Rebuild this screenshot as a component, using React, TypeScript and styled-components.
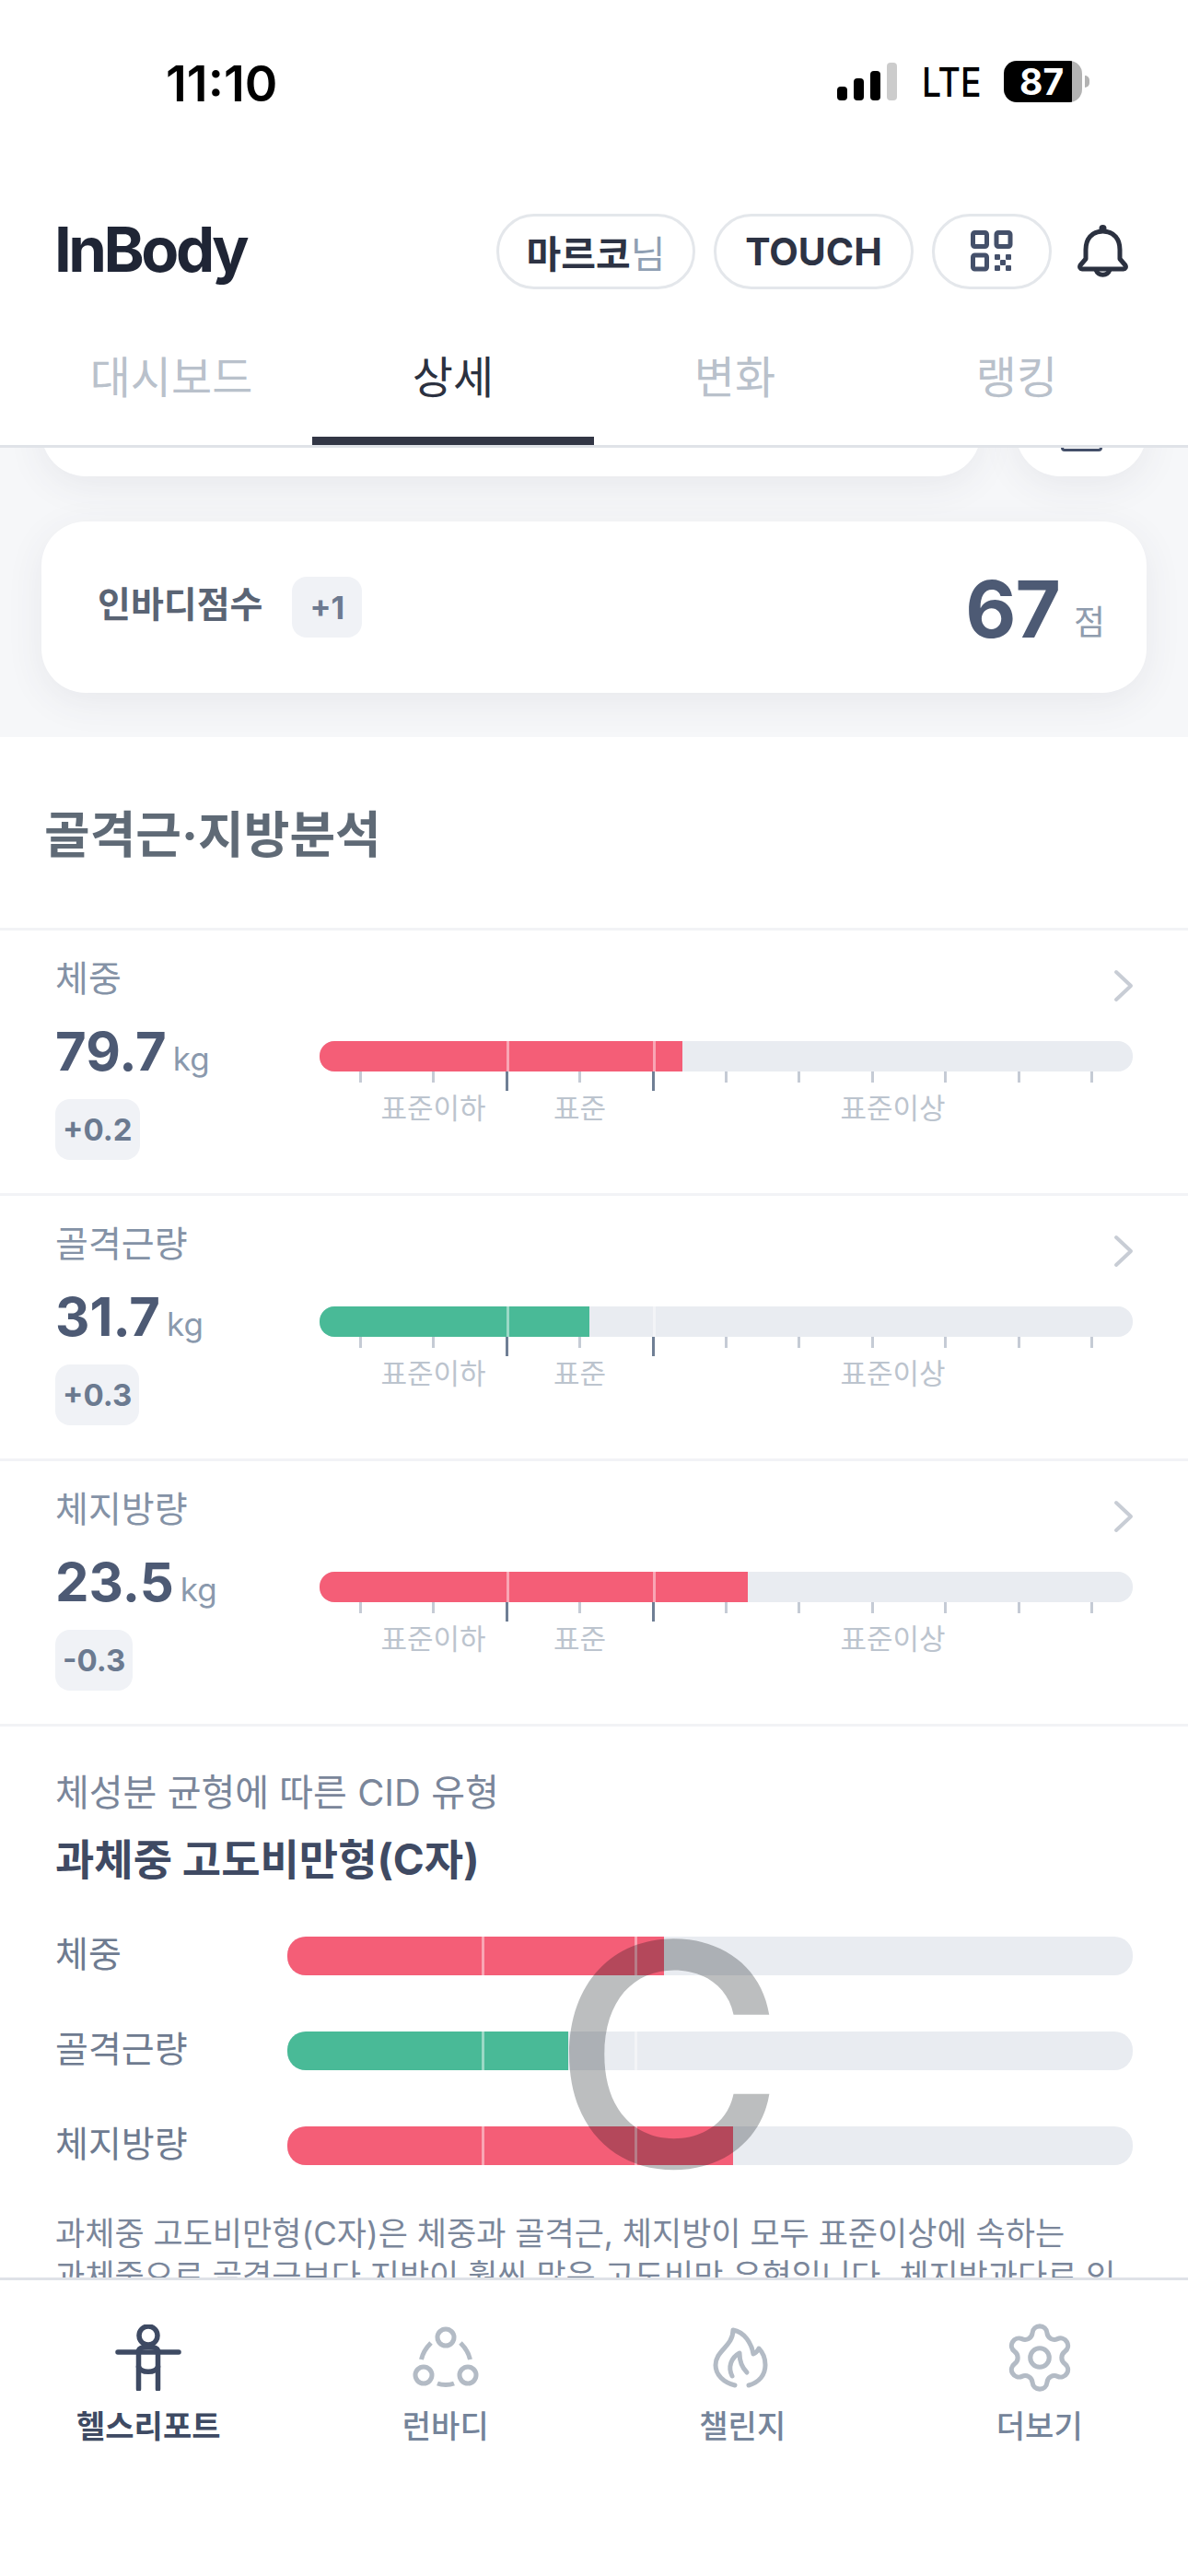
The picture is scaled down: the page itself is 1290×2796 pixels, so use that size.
import styled, { createGlobalStyle } from 'styled-components';
import { Settings } from 'lucide-react';

const rows = [
  { name: '체중', value: '79.7', diff: '+0.2', fill: 394, color: '#f45e77' },
  { name: '골격근량', value: '31.7', diff: '+0.3', fill: 293, color: '#49ba97' },
  { name: '체지방량', value: '23.5', diff: '-0.3', fill: 465, color: '#f45e77' },
];

const cidRows = [
  { name: '체중', fill: 409, color: '#f45e77' },
  { name: '골격근량', fill: 305, color: '#49ba97' },
  { name: '체지방량', fill: 484, color: '#f45e77' },
];

const ticks = [false, false, true, false, true, false, false, false, false, false, false];

export default function App() {
  return (
    <Page>
      <GlobalStyle />
      <StatusBar>
        <Time>11:10</Time>
        <StatusRight>
          <Signal>
            <SignalBar $h={15} />
            <SignalBar $h={24} />
            <SignalBar $h={32} />
            <SignalBar $h={41} $off />
          </Signal>
          <Lte>LTE</Lte>
          <Battery>
            <BatteryBody>87</BatteryBody>
            <BatteryNub />
          </Battery>
        </StatusRight>
      </StatusBar>

      <TopBar>
        <Logo>InBody</Logo>
        <TopActions>
          <Pill $w={216}>
            마르코<PillSuffix>님</PillSuffix>
          </Pill>
          <Pill $w={217}>TOUCH</Pill>
          <Pill $w={130}>
            <svg width="46" height="46" viewBox="0 0 46 46" fill="none" stroke="#44506a" strokeWidth="5">
              <rect x="2.5" y="2.5" width="15" height="15" rx="2" />
              <rect x="28" y="2.5" width="15" height="15" rx="2" />
              <rect x="2.5" y="27" width="15" height="15" rx="2" />
              <g fill="#44506a" stroke="none">
                <rect x="26" y="26" width="6" height="6" rx="1" />
                <rect x="38" y="26" width="6" height="6" rx="1" />
                <rect x="32" y="32" width="6" height="6" rx="1" />
                <rect x="26" y="38" width="6" height="6" rx="1" />
                <rect x="38" y="38" width="6" height="6" rx="1" />
              </g>
            </svg>
          </Pill>
          <BellWrap>
            <svg width="56" height="62" viewBox="0 0 56 62" fill="none" stroke="#2b3140" strokeWidth="5" strokeLinejoin="round">
              <circle cx="27.5" cy="5" r="4" fill="#2b3140" stroke="none" />
              <path d="M27.5 8C15 8 9 17 9 28V38L3 45C2 47 3 49 5 49H50C52 49 53 47 52 45L46 38V28C46 17 40 8 27.5 8Z" />
              <path d="M20 50a8 8 0 0 0 15 0" />
            </svg>
          </BellWrap>
        </TopActions>
      </TopBar>

      <TabBar>
        <Tab>대시보드</Tab>
        <Tab $active>상세</Tab>
        <Tab>변화</Tab>
        <Tab>랭킹</Tab>
      </TabBar>

      <Content>
        <GraySection>
          <ClippedRow>
            <ClippedCard />
            <SmallCard>
              <CalendarBase />
            </SmallCard>
          </ClippedRow>
          <ScoreCard>
            <ScoreLabel>인바디점수</ScoreLabel>
            <ScoreBadge>+1</ScoreBadge>
            <ScoreValue>67</ScoreValue>
            <ScoreUnit>점</ScoreUnit>
          </ScoreCard>
        </GraySection>

        <SectionTitle>골격근·지방분석</SectionTitle>

        {rows.map((row) => (
          <MetricRow key={row.name}>
            <MetricInfo>
              <MetricName>{row.name}</MetricName>
              <MetricValue>
                {row.value}
                <MetricUnit>kg</MetricUnit>
              </MetricValue>
              <DiffBadge>{row.diff}</DiffBadge>
            </MetricInfo>
            <MetricChart>
              <Chevron>
                <svg width="26" height="36" viewBox="0 0 26 36" fill="none" stroke="#c8cdd5" strokeWidth="4" strokeLinecap="round" strokeLinejoin="round">
                  <path d="M5 3L21 18L5 33" />
                </svg>
              </Chevron>
              <MetricTrack>
                <TrackFill $color={row.color} style={{ width: row.fill }} />
                <TrackMark $left={203} />
                <TrackMark $left={362} />
              </MetricTrack>
              <Ticks>
                {ticks.map((major, i) => (
                  <Tick key={i} $major={major} />
                ))}
              </Ticks>
              <ScaleLabels>
                <span>표준이하</span>
                <span>표준</span>
                <span>표준이상</span>
              </ScaleLabels>
            </MetricChart>
          </MetricRow>
        ))}

        <CidSection>
          <CidEyebrow>체성분 균형에 따른 CID 유형</CidEyebrow>
          <CidTitle>과체중 고도비만형(C자)</CidTitle>
          <CidRows>
            {cidRows.map((row) => (
              <CidRow key={row.name}>
                <CidName>{row.name}</CidName>
                <CidTrack>
                  <TrackFill $color={row.color} style={{ width: row.fill }} />
                  <TrackMark $left={211} />
                  <TrackMark $left={377} />
                </CidTrack>
              </CidRow>
            ))}
            <CidLetter>C</CidLetter>
          </CidRows>
          <CidText>
            과체중 고도비만형(C자)은 체중과 골격근, 체지방이 모두 표준이상에 속하는
            <br />
            과체중으로 골격근보다 지방이 훨씬 많은 고도비만 유형입니다. 체지방과다로 인
          </CidText>
        </CidSection>
      </Content>

      <BottomNav>
        <NavItem>
          <svg width="72" height="72" viewBox="0 0 72 72" fill="none" stroke="#3e4a63" strokeWidth="5.5" strokeLinecap="round">
            <circle cx="36" cy="12" r="10" />
            <path d="M3 30H69" />
            <path d="M25.5 30V70M46.5 30V70" />
            <path d="M25.5 28C27 23 45 23 46.5 28" />
            <path d="M25.5 46C28 53 44 53 46.5 46" />
          </svg>
          <NavLabel $active>헬스리포트</NavLabel>
        </NavItem>
        <NavItem>
          <svg width="72" height="72" viewBox="0 0 72 72" fill="none" stroke="#b3bbc5" strokeWidth="5">
            <circle cx="36" cy="14" r="9" />
            <circle cx="12" cy="55" r="9" />
            <circle cx="60" cy="55" r="9" />
            <path d="M9.5 38C11 31 15 25 20 20M62.5 38C61 31 57 25 52 20M27 64C32 66 40 66 45 64" />
          </svg>
          <NavLabel>런바디</NavLabel>
        </NavItem>
        <NavItem>
          <svg width="72" height="72" viewBox="2 0 72 72" fill="none" stroke="#b3bbc5" strokeWidth="5" strokeLinecap="round" strokeLinejoin="round">
            <path d="M30 66C18 63 9 55 9 44C9 28 28 24 28 6C40 8 48 20 50 32C53 31 55 28 56 26C61 31 63 37 63 44C63 55 56 63 45 66" />
            <path d="M27 56C22 46 26 36 35 31C35 41 38 47 43 52" />
          </svg>
          <NavLabel>챌린지</NavLabel>
        </NavItem>
        <NavItem>
          <GearIcon size={82} color="#b3bbc5" strokeWidth={1.5} />
          <NavLabel>더보기</NavLabel>
        </NavItem>
      </BottomNav>
    </Page>
  );
}

const GlobalStyle = createGlobalStyle`
  html, body {
    margin: 0;
    padding: 0;
    background: #fff;
  }
  * {
    box-sizing: border-box;
  }
`;

const Page = styled.div`
  width: 1290px;
  height: 2796px;
  display: flex;
  flex-direction: column;
  overflow: hidden;
  background: #fff;
  font-family: Inter, "Noto Sans CJK KR", sans-serif;
`;

const StatusBar = styled.div`
  height: 232px;
  flex: none;
  padding: 62px 107px 0 180px;
  display: flex;
  justify-content: space-between;
  align-items: flex-start;
`;

const Time = styled.div`
  font-size: 54px;
  line-height: 54px;
  font-weight: 600;
  margin-top: 2px;
  color: #000;
`;

const StatusRight = styled.div`
  display: flex;
  align-items: flex-end;
  height: 49px;
`;

const Signal = styled.div`
  display: flex;
  align-items: flex-end;
  gap: 7px;
  height: 41px;
  margin-bottom: 2px;
`;

const SignalBar = styled.div<{ $h: number; $off?: boolean }>`
  width: 11px;
  height: ${(p) => p.$h}px;
  border-radius: 4px;
  background: ${(p) => (p.$off ? '#cccccc' : '#000')};
`;

const Lte = styled.div`
  width: 62px;
  margin: 0 27px 0 27px;
  font-size: 44px;
  line-height: 44px;
  font-weight: 500;
  color: #000;
  transform: scaleX(0.85);
  transform-origin: left center;
`;

const Battery = styled.div`
  display: flex;
  align-items: center;
`;

const BatteryBody = styled.div`
  width: 85px;
  height: 45px;
  border-radius: 14px;
  background: linear-gradient(to right, #000 74px, #b3b3b3 74px);
  color: #fff;
  font-size: 39px;
  line-height: 45px;
  font-weight: 700;
  padding-left: 17px;
`;

const BatteryNub = styled.div`
  width: 5px;
  height: 13px;
  margin-left: 3px;
  border-radius: 0 6px 6px 0;
  background: #b3b3b3;
`;

const TopBar = styled.div`
  height: 82px;
  flex: none;
  padding: 0 64px 0 59px;
  display: flex;
  justify-content: space-between;
  align-items: center;
`;

const Logo = styled.div`
  margin-top: -6px;
  font-size: 67px;
  font-weight: 700;
  letter-spacing: -3.5px;
  color: #1f2535;
`;

const TopActions = styled.div`
  display: flex;
  align-items: center;
  gap: 20px;
`;

const Pill = styled.div<{ $w: number }>`
  width: ${(p) => p.$w}px;
  height: 82px;
  border: 3px solid #e4e7eb;
  border-radius: 41px;
  display: flex;
  justify-content: center;
  align-items: center;
  font-size: 41px;
  font-weight: 700;
  color: #2d3344;
`;

const PillSuffix = styled.span`
  font-weight: 400;
  color: #8f9fb3;
`;

const BellWrap = styled.div`
  display: flex;
  margin-left: 8px;
  margin-top: 1px;
`;

const TabBar = styled.div`
  height: 172px;
  flex: none;
  padding: 0 33px;
  display: flex;
  border-bottom: 3px solid #e0e3e8;
`;

const Tab = styled.div<{ $active?: boolean }>`
  width: 306px;
  height: 169px;
  padding-top: 66px;
  text-align: center;
  font-size: 48px;
  line-height: 60px;
  font-weight: 400;
  color: ${(p) => (p.$active ? '#2b3140' : '#b9c1cb')};
  border-bottom: 9px solid ${(p) => (p.$active ? '#323645' : 'transparent')};
`;

const Content = styled.div`
  flex: 1;
  min-height: 0;
  overflow: hidden;
`;

const GraySection = styled.div`
  height: 314px;
  padding: 0 45px;
  overflow: hidden;
  background: #f6f7f9;
`;

const ClippedRow = styled.div`
  display: flex;
  gap: 38px;
  margin-top: -70px;
  height: 101px;
`;

const ClippedCard = styled.div`
  flex: 1;
  background: #fff;
  border-radius: 48px;
  box-shadow: 0 10px 40px rgba(60, 70, 90, 0.08);
`;

const SmallCard = styled.div`
  width: 142px;
  padding-top: 54px;
  display: flex;
  justify-content: center;
  background: #fff;
  border-radius: 48px;
  box-shadow: 0 10px 40px rgba(60, 70, 90, 0.08);
`;

const CalendarBase = styled.div`
  width: 45px;
  height: 20px;
  border: 3px solid #44506a;
  border-radius: 4px;
`;

const ScoreCard = styled.div`
  height: 186px;
  margin-top: 49px;
  padding: 0 45px 0 61px;
  display: flex;
  align-items: flex-start;
  background: #fff;
  border-radius: 48px;
  box-shadow: 0 10px 40px rgba(60, 70, 90, 0.08);
`;

const ScoreLabel = styled.div`
  margin-top: 65px;
  font-size: 39px;
  line-height: 50px;
  font-weight: 700;
  color: #5a6474;
`;

const ScoreBadge = styled.div`
  margin: 60px 0 0 32px;
  width: 76px;
  height: 66px;
  border-radius: 16px;
  background: #f0f2f6;
  display: flex;
  justify-content: center;
  align-items: center;
  font-size: 34px;
  font-weight: 700;
  color: #6d7a90;
`;

const ScoreValue = styled.div`
  margin: 46px 0 0 auto;
  font-size: 85px;
  line-height: 100px;
  font-weight: 700;
  letter-spacing: -1px;
  color: #4d5a74;
`;

const ScoreUnit = styled.div`
  margin: 88px 0 0 15px;
  font-size: 37px;
  line-height: 44px;
  font-weight: 400;
  color: #8f9cae;
`;

const SectionTitle = styled.div`
  height: 207px;
  padding: 0 0 3px 48px;
  display: flex;
  align-items: center;
  font-size: 54px;
  font-weight: 700;
  color: #5f6a76;
`;

const MetricRow = styled.div`
  height: 288px;
  border-top: 3px solid #f2f3f6;
  padding: 0 60px;
  display: flex;
`;

const MetricInfo = styled.div`
  width: 287px;
  flex: none;
  padding-top: 27px;
`;

const MetricName = styled.div`
  font-size: 39px;
  line-height: 50px;
  color: #8492a6;
`;

const MetricValue = styled.div`
  margin-top: 19px;
  font-size: 58px;
  line-height: 70px;
  font-weight: 700;
  color: #4d5a74;
`;

const MetricUnit = styled.span`
  margin-left: 7px;
  font-size: 35px;
  font-weight: 400;
  color: #8a99ad;
`;

const DiffBadge = styled.div`
  display: inline-flex;
  align-items: center;
  height: 66px;
  margin-top: 9px;
  padding: 0 8px;
  border-radius: 16px;
  background: #f0f2f6;
  font-size: 33px;
  font-weight: 700;
  color: #6b7a90;
`;

const MetricChart = styled.div`
  flex: 1;
  padding-top: 42px;
`;

const Chevron = styled.div`
  height: 36px;
  display: flex;
  justify-content: flex-end;
  margin: 0 -3px 42px 0;
`;

const MetricTrack = styled.div`
  position: relative;
  height: 33px;
  border-radius: 16px;
  overflow: hidden;
  background: #e9ecf1;
`;

const TrackFill = styled.div<{ $color: string }>`
  height: 100%;
  background: ${(p) => p.$color};
`;

const TrackMark = styled.div<{ $left: number }>`
  position: absolute;
  top: 0;
  bottom: 0;
  left: ${(p) => p.$left}px;
  width: 3px;
  background: rgba(255, 255, 255, 0.45);
`;

const Ticks = styled.div`
  height: 21px;
  margin: 0 43px 0 43px;
  display: flex;
  justify-content: space-between;
  align-items: flex-start;
`;

const Tick = styled.div<{ $major: boolean }>`
  width: 3px;
  height: ${(p) => (p.$major ? 21 : 12)}px;
  background: ${(p) => (p.$major ? '#6f7f95' : '#c5cbd5')};
`;

const ScaleLabels = styled.div`
  margin: 1px 0 0 44px;
  display: grid;
  grid-template-columns: 159px 159px 1fr;
  text-align: center;
  font-size: 31px;
  line-height: 36px;
  color: #bcc4ce;
`;

const CidSection = styled.div`
  border-top: 3px solid #f2f3f6;
  padding: 47px 60px 0;
`;

const CidEyebrow = styled.div`
  font-size: 40px;
  line-height: 50px;
  color: #7a869a;
`;

const CidTitle = styled.div`
  margin-top: 19px;
  font-size: 46px;
  line-height: 56px;
  font-weight: 700;
  color: #3f4a63;
`;

const CidRows = styled.div`
  position: relative;
  margin-top: 56px;
  display: flex;
  flex-direction: column;
  gap: 61px;
`;

const CidRow = styled.div`
  display: flex;
  align-items: center;
  height: 42px;
`;

const CidName = styled.div`
  width: 252px;
  flex: none;
  padding-bottom: 10px;
  font-size: 39px;
  color: #6e7b90;
`;

const CidTrack = styled.div`
  position: relative;
  flex: 1;
  height: 42px;
  border-radius: 20px;
  overflow: hidden;
  background: #e9ecf1;
`;

const CidLetter = styled.div`
  position: absolute;
  top: -40px;
  left: 539px;
  font-size: 336px;
  line-height: 336px;
  font-weight: 500;
  color: rgba(8, 14, 20, 0.27);
  transform: scaleX(1.03);
  transform-origin: left center;
`;

const CidText = styled.div`
  margin-top: 51px;
  font-size: 35px;
  line-height: 46px;
  white-space: nowrap;
  color: #7a869a;
`;

const BottomNav = styled.div`
  height: 324px;
  flex: none;
  border-top: 3px solid #dfe2e7;
  display: grid;
  grid-template-columns: repeat(4, 1fr);
  padding-top: 48px;
  background: #fff;
`;

const NavItem = styled.div`
  display: flex;
  flex-direction: column;
  align-items: center;
`;

const GearIcon = styled(Settings)`
  margin: -5px;
`;

const NavLabel = styled.div<{ $active?: boolean }>`
  margin-top: 19px;
  font-size: 34px;
  line-height: 40px;
  font-weight: ${(p) => (p.$active ? 600 : 500)};
  color: ${(p) => (p.$active ? '#3e4a63' : '#75849a')};
`;
